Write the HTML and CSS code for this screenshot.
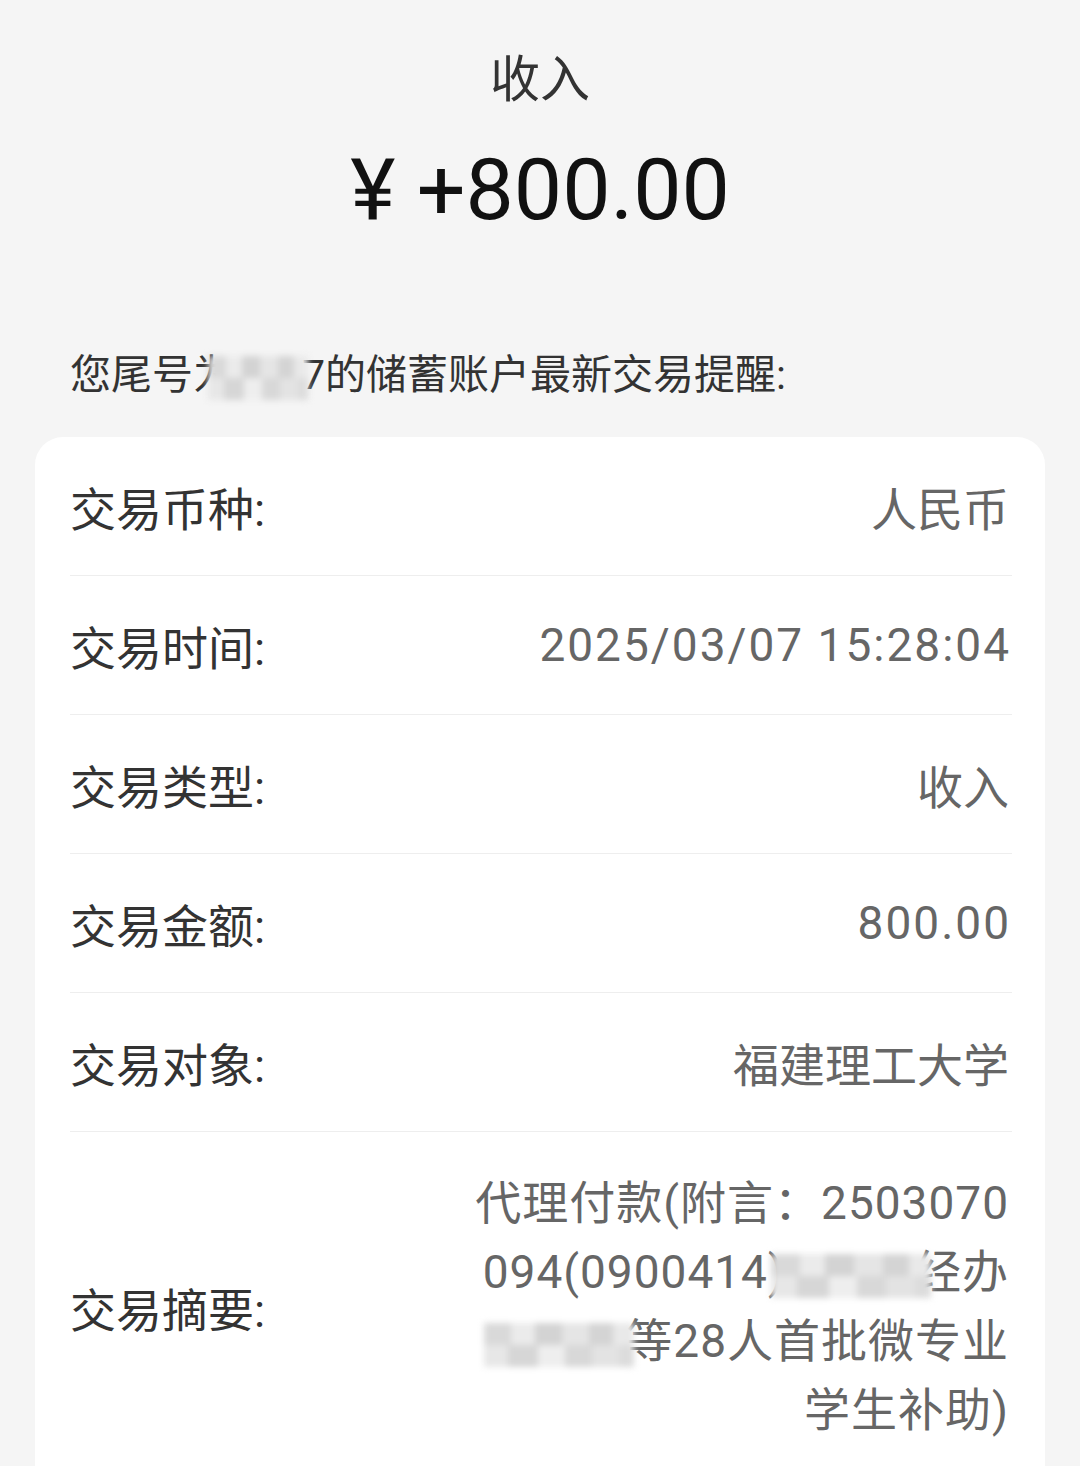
FILE: index.html
```html
<!DOCTYPE html>
<html lang="zh-CN">
<head>
  <meta charset="UTF-8">
  <meta name="viewport" content="width=device-width, initial-scale=1.0">
  <title>收入</title>
  <link rel="stylesheet" href="styles.css">
</head>
<body>

  <header class="head">
    <div class="head-title">收入</div>
    <div class="head-amount">¥ +800.00</div>
  </header>

  <p class="notice">您尾号为<span class="mask mask-acct"></span>7的储蓄账户最新交易提醒:</p>

  <section class="card">
    <div class="row">
      <span class="label">交易币种:</span>
      <span class="value">人民币</span>
    </div>
    <div class="row">
      <span class="label">交易时间:</span>
      <span class="value num">2025/03/07 15:28:04</span>
    </div>
    <div class="row">
      <span class="label">交易类型:</span>
      <span class="value">收入</span>
    </div>
    <div class="row">
      <span class="label">交易金额:</span>
      <span class="value num">800.00</span>
    </div>
    <div class="row">
      <span class="label">交易对象:</span>
      <span class="value">福建理工大学</span>
    </div>
    <div class="row row-multi">
      <span class="label">交易摘要:</span>
      <span class="value value-multi">
        <span class="line">代理付款(附言：2503070</span>
        <span class="line">094(0900414)<span class="mask mask-name"></span>经办</span>
        <span class="line"><span class="mask mask-who"></span>等28人首批微专业</span>
        <span class="line">学生补助)</span>
      </span>
    </div>
  </section>

</body>
</html>
```

FILE: styles.css
```css
* {
  box-sizing: border-box;
}
body {
  margin: 0;
  background: #f5f5f5;
  font-family: Roboto, "Noto Sans CJK SC", sans-serif;
  color: #333;
}

.head {
  padding-top: 45px;
  text-align: center;
}
.head-title {
  font-size: 50px;
  line-height: 70px;
  color: #333;
}
.head-amount {
  margin-top: 25px;
  font-size: 86px;
  line-height: 100px;
  color: #111;
}

.notice {
  margin: 105px 0 0;
  padding-left: 70px;
  font-size: 41px;
  line-height: 60px;
  color: #333;
}

.card {
  margin: 32px 35px 0;
  padding: 0 33px 0 35px;
  background: #fff;
  border-radius: 28px 28px 0 0;
  min-height: 1100px;
}
.row {
  display: flex;
  align-items: center;
  justify-content: space-between;
  height: 139px;
  border-bottom: 1px solid #eee;
  font-size: 46px;
}
.row-multi {
  height: auto;
  padding: 37px 0;
  border-bottom: none;
}
.label {
  color: #333;
  white-space: nowrap;
}
.value {
  margin-right: 3px;
  color: #666;
  text-align: right;
}
.num {
  letter-spacing: 2px;
  margin-right: 1px;
}
.value-multi {
  display: flex;
  flex-direction: column;
  align-items: flex-end;
  letter-spacing: 1px;
}
.line {
  display: block;
  line-height: 69px;
  white-space: nowrap;
}

/* pixelated privacy blur */
.mask {
  display: inline-block;
  vertical-align: middle;
  height: 44px;
  filter: blur(3px);
  background:
    linear-gradient(90deg, #d9d9d9 0 18%, #ebebeb 18% 34%, #d3d3d3 34% 52%, #e5e5e5 52% 70%, #d4d4d4 70% 86%, #e9e9e9 86%) top / 100% 50% no-repeat,
    linear-gradient(90deg, #e7e7e7 0 16%, #d6d6d6 16% 36%, #eeeeee 36% 54%, #d8d8d8 54% 72%, #e3e3e3 72% 90%, #dcdcdc 90%) bottom / 100% 50% no-repeat;
}
.mask-acct {
  width: 100px;
  margin-left: -26px;
  margin-right: -6px;
}
.mask-name {
  width: 160px;
  margin-left: -14px;
  margin-right: -16px;
}
.mask-who {
  width: 150px;
  margin-right: -8px;
}
```
